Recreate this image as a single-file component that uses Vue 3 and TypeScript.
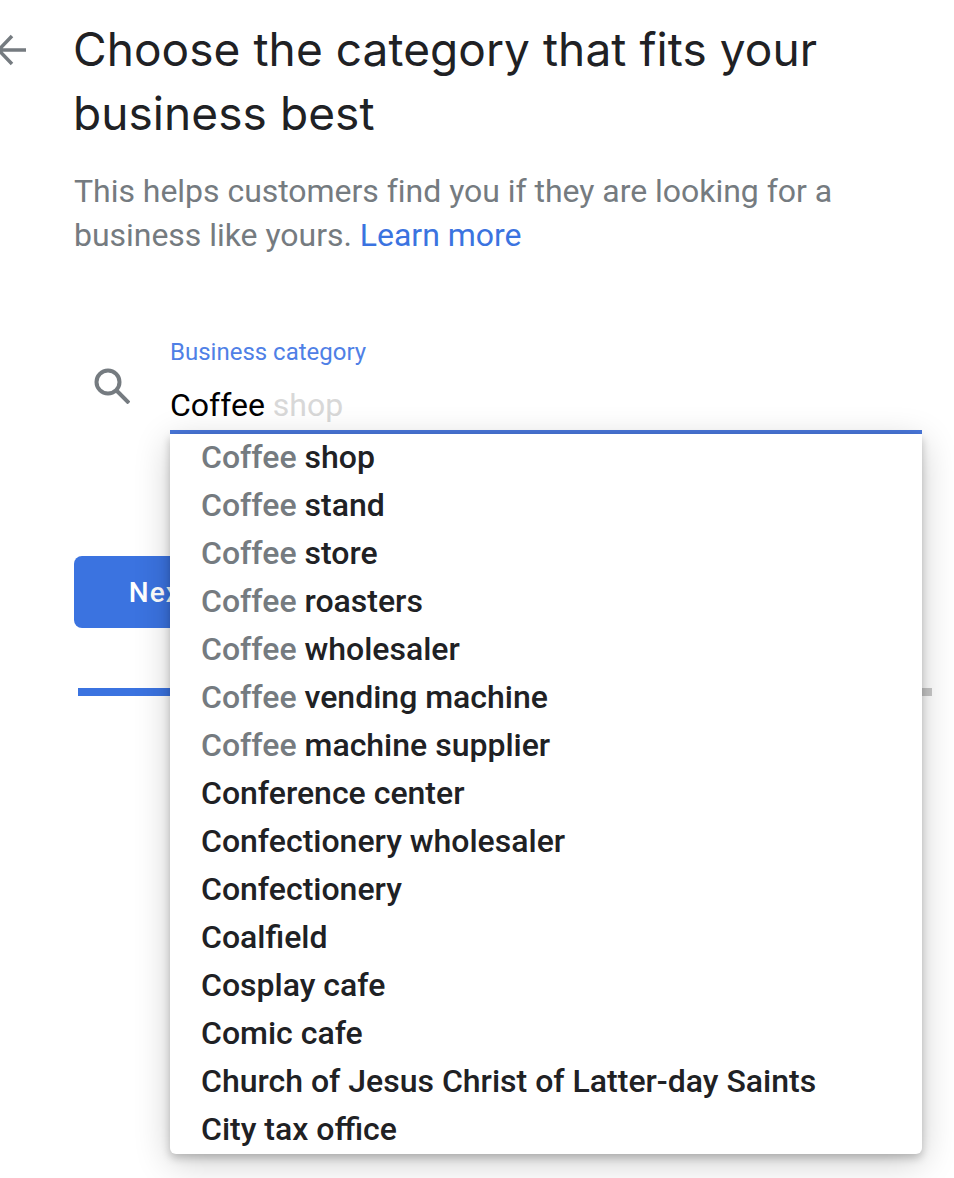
<script setup lang="ts">
interface Item { match: string; rest: string }
const items: Item[] = [
  { match: 'Coffee', rest: ' shop' },
  { match: 'Coffee', rest: ' stand' },
  { match: 'Coffee', rest: ' store' },
  { match: 'Coffee', rest: ' roasters' },
  { match: 'Coffee', rest: ' wholesaler' },
  { match: 'Coffee', rest: ' vending machine' },
  { match: 'Coffee', rest: ' machine supplier' },
  { match: '', rest: 'Conference center' },
  { match: '', rest: 'Confectionery wholesaler' },
  { match: '', rest: 'Confectionery' },
  { match: '', rest: 'Coalfield' },
  { match: '', rest: 'Cosplay cafe' },
  { match: '', rest: 'Comic cafe' },
  { match: '', rest: 'Church of Jesus Christ of Latter-day Saints' },
  { match: '', rest: 'City tax office' },
]
</script>

<template>
  <div class="page">
    <header class="head">
      <svg class="back" viewBox="0 0 30 32" width="30" height="32" aria-hidden="true">
        <path d="M29 16H2M15 2L1.5 16L15 30" fill="none" stroke="#757b80" stroke-width="3.5" />
      </svg>
      <h1 class="title">Choose the category that fits your business best</h1>
    </header>
    <p class="sub">This helps customers find you if they are looking for a business like yours. <a class="link">Learn more</a></p>

    <div class="field">
      <svg class="search" viewBox="0 0 36 36" width="36" height="36" aria-hidden="true">
        <circle cx="14" cy="14" r="11.5" fill="none" stroke="#757b80" stroke-width="4" />
        <path d="M22 22l13 13" fill="none" stroke="#757b80" stroke-width="4" />
      </svg>
      <div class="control">
        <label class="label">Business category</label>
        <div class="input">Coffee <span class="hint">shop</span></div>
        <ul class="menu">
          <li v-for="it in items" :key="it.match + it.rest" class="opt"><span class="match">{{ it.match }}</span>{{ it.rest }}</li>
        </ul>
      </div>
    </div>

    <button class="next">Next</button>
    <div class="progress"><div class="bar"></div></div>
  </div>
</template>

<style scoped>
.page {
  position: relative;
  width: 954px;
  height: 1178px;
  overflow: hidden;
  background: #fff;
  font-family: Roboto, sans-serif;
  box-sizing: border-box;
  padding: 17px 0 0 74px;
}
.head { position: relative; }
.back { position: absolute; left: -77px; top: 17px; }
.title {
  margin: 0 0 0 -1px;
  width: 800px;
  font-family: Inter, sans-serif;
  font-weight: 400;
  font-size: 46px;
  line-height: 64px;
  letter-spacing: 0.07px;
  color: #202124;
}
.sub {
  margin: 24px 0 0;
  width: 790px;
  font-size: 32px;
  line-height: 44px;
  letter-spacing: -0.03px;
  color: #757b80;
}
.link { color: #3b73e0; }
.field { display: flex; margin-top: 80px; }
.search { margin: 31px 0 0 20px; }
.control { position: relative; margin-left: 40px; width: 752px; }
.label { display: block; font-size: 24px; line-height: 30px; color: #4f80e6; }
.input {
  margin-top: 16px;
  height: 47px;
  font-size: 32px;
  line-height: 44px;
  color: #000;
  border-bottom: 4px solid #4a78dc;
}
.hint { color: #d8d8d8; }
.menu {
  position: absolute;
  left: 0;
  top: 97px;
  z-index: 2;
  width: 752px;
  margin: 0;
  padding: 0;
  list-style: none;
  background: #fff;
  border-radius: 0 0 6px 6px;
  box-shadow: 0 4px 8px rgba(0, 0, 0, 0.22), 0 8px 36px rgba(0, 0, 0, 0.2);
}
.opt {
  height: 48px;
  padding-left: 31px;
  font-size: 32px;
  font-weight: 500;
  line-height: 46px;
  color: #202124;
  white-space: pre;
}
.match { color: #757b80; }
.next {
  display: block;
  margin-top: 122px;
  width: 172px;
  height: 72px;
  padding: 0;
  border: 0;
  border-radius: 8px;
  background: #3b73e0;
  color: #fff;
  font-family: Roboto, sans-serif;
  font-size: 28px;
  font-weight: 500;
  letter-spacing: 1px;
}
.progress {
  margin: 60px 0 0 4px;
  width: 854px;
  height: 8px;
  background: #c8c8c8;
}
.bar { width: 300px; height: 8px; background: #3b73e0; }
</style>
